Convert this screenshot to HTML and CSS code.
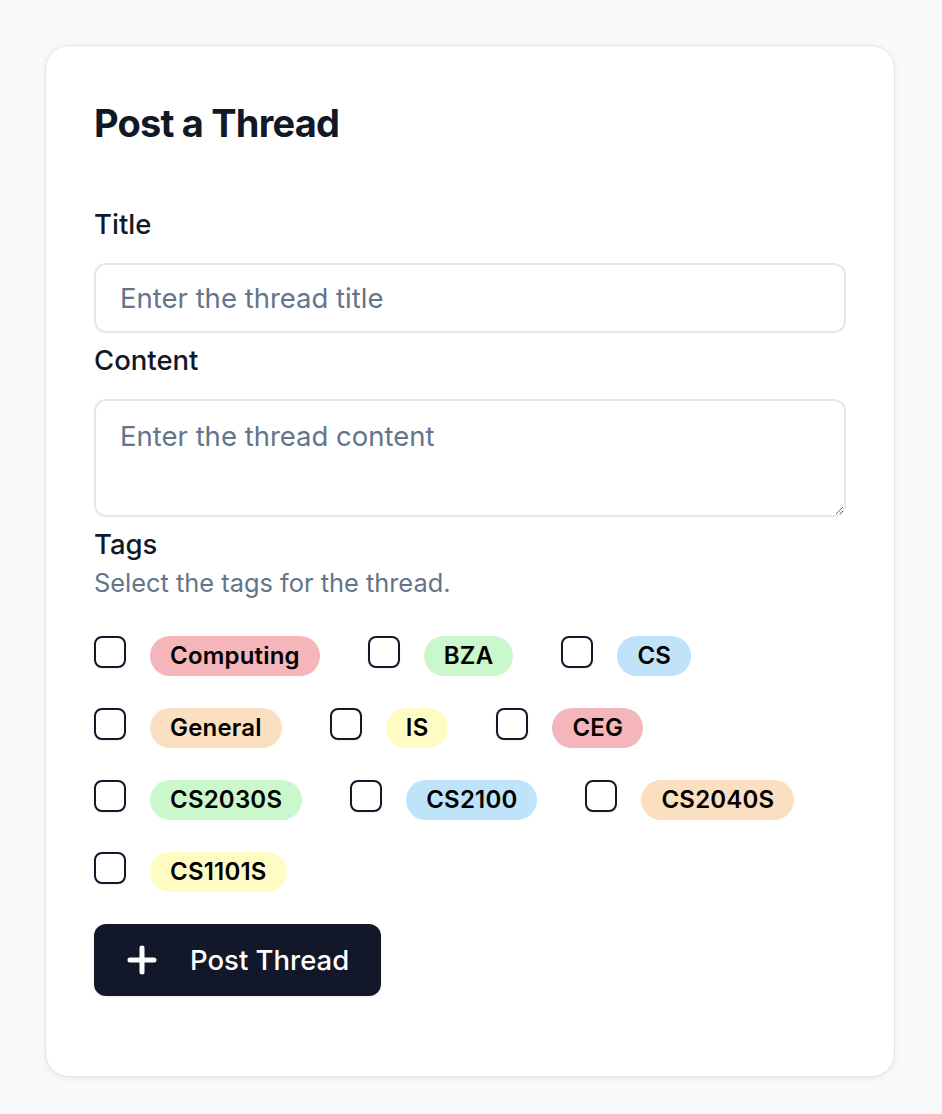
FILE: index.html
```html
<!DOCTYPE html>
<html>
<head>
<meta charset="utf-8">
<link rel="stylesheet" href="styles.css">
</head>
<body>
<div class="card">
  <h1 class="title">Post a Thread</h1>
  <form class="form">
    <div class="field">
      <label class="label" for="t">Title</label>
      <input id="t" class="input" type="text" placeholder="Enter the thread title">
    </div>
    <div class="field">
      <label class="label" for="c">Content</label>
      <textarea id="c" class="textarea" placeholder="Enter the thread content"></textarea>
    </div>
    <div class="field tags-field">
      <div class="label">Tags</div>
      <div class="desc">Select the tags for the thread.</div>
      <div class="tags">
        <label class="tag"><span class="box"></span><span class="badge pink">Computing</span></label>
        <label class="tag"><span class="box"></span><span class="badge green">BZA</span></label>
        <label class="tag"><span class="box"></span><span class="badge blue">CS</span></label>
        <label class="tag"><span class="box"></span><span class="badge peach">General</span></label>
        <label class="tag"><span class="box"></span><span class="badge yellow">IS</span></label>
        <label class="tag"><span class="box"></span><span class="badge pink">CEG</span></label>
        <label class="tag"><span class="box"></span><span class="badge green">CS2030S</span></label>
        <label class="tag"><span class="box"></span><span class="badge blue">CS2100</span></label>
        <label class="tag"><span class="box"></span><span class="badge peach">CS2040S</span></label>
        <label class="tag"><span class="box"></span><span class="badge yellow">CS1101S</span></label>
      </div>
    </div>
    <button type="button" class="btn">
      <svg class="plus" width="32" height="32" viewBox="0 0 32 32"><path d="M16 4v24M4 16h24" stroke="#fff" stroke-width="5" stroke-linecap="round" fill="none"/></svg>
      <span>Post Thread</span>
    </button>
  </form>
</div>
</body>
</html>
```
FILE: styles.css
```css
* { box-sizing: border-box; }
html, body { margin: 0; padding: 0; }
body {
  background: #f8f9fb;
  font-family: Inter, "Noto Sans", sans-serif;
  color: #0f172a;
  padding: 45px 47px 36px 45px;
}
.card {
  width: 850px;
  height: 1032px;
  background: #fff;
  border: 1px solid #e2e5ec;
  border-radius: 24px;
  box-shadow: 0 2px 6px rgba(15, 23, 42, 0.06);
  padding: 48px 48px;
}
.title {
  margin: 5px 0 0;
  font-size: 38px;
  line-height: 48px;
  font-weight: 700;
  letter-spacing: -0.8px;
  color: #111827;
}
.form {
  margin-top: 59px;
  display: flex;
  flex-direction: column;
}
.field {
  display: flex;
  flex-direction: column;
}
.label {
  font-size: 27.5px;
  line-height: 36px;
  font-weight: 500;
  color: #111827;
  margin-bottom: 21px;
}
.input, .textarea {
  width: 100%;
  border: 2px solid #e2e6ee;
  border-radius: 12px;
  font-family: Inter, "Noto Sans", sans-serif;
  font-size: 27.5px;
  color: #111827;
  background: #fff;
  outline: none;
}
.input {
  height: 70px;
  padding: 0 24px;
  margin-bottom: 9px;
}
.textarea {
  height: 118px;
  padding: 18px 24px;
  resize: vertical;
  margin-bottom: 9px;
  display: block;
}
.input::placeholder, .textarea::placeholder { color: #64748b; }
.tags-field .label { margin-bottom: 3px; }
.desc {
  font-size: 25.4px;
  line-height: 36px;
  color: #64748b;
  margin-bottom: 35px;
}
.tags {
  display: flex;
  flex-wrap: wrap;
  column-gap: 48px;
  row-gap: 32px;
}
.tag {
  display: flex;
  align-items: flex-start;
  gap: 24px;
}
.box {
  width: 32px;
  height: 32px;
  border: 2px solid #111827;
  border-radius: 8px;
  box-shadow: 0 1px 2px rgba(0,0,0,0.08);
  background: #fff;
}
.badge {
  height: 40px;
  line-height: 40px;
  padding: 0 20px;
  border-radius: 20px;
  font-size: 24px;
  font-weight: 600;
  letter-spacing: 0.2px;
  color: #000;
}
.pink { background: #f4b6bb; }
.green { background: #cbf7cc; }
.blue { background: #bfe3f8; }
.peach { background: #fadfc0; }
.yellow { background: #fefcc3; }
.btn {
  margin-top: 32px;
  align-self: flex-start;
  height: 72px;
  padding: 0 32px;
  display: flex;
  align-items: center;
  gap: 32px;
  background: #121829;
  color: #fff;
  border: none;
  border-radius: 12px;
  font-family: Inter, "Noto Sans", sans-serif;
  font-size: 27.5px;
  font-weight: 500;
  box-shadow: 0 1px 3px rgba(0,0,0,0.1);
}
```
